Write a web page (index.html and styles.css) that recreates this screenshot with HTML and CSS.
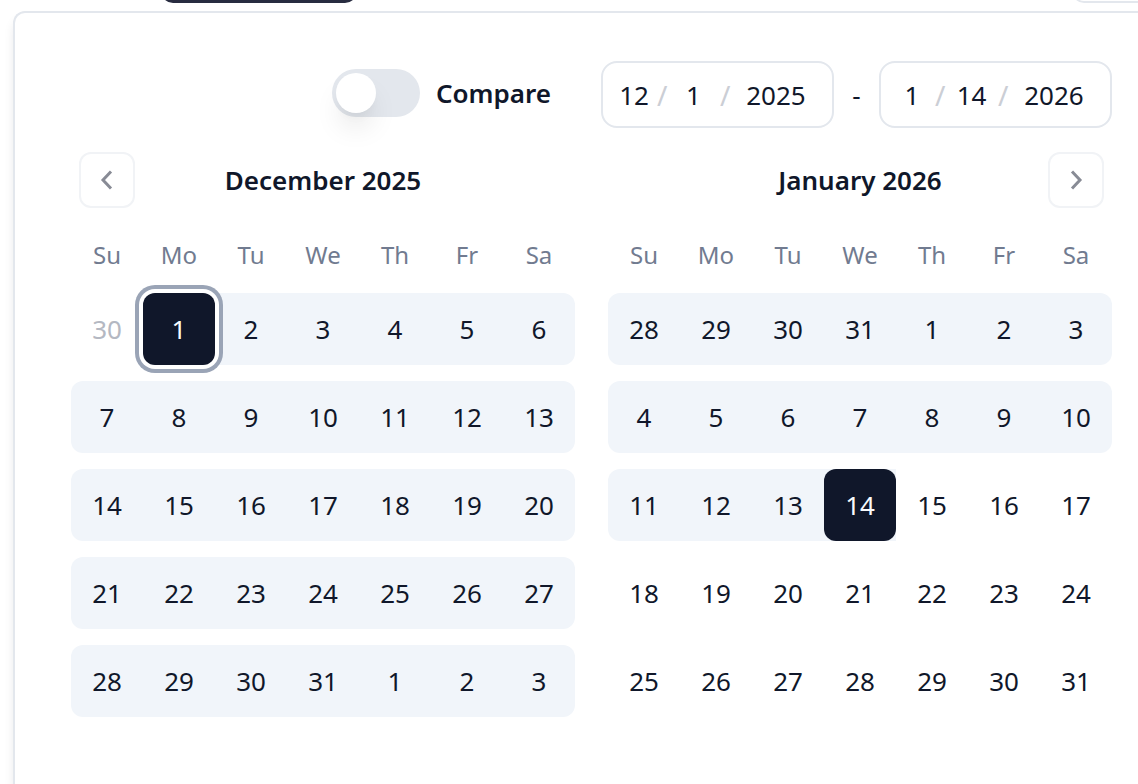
FILE: index.html
```html
<!DOCTYPE html>
<html lang="en">
<head>
    <meta charset="UTF-8">
    <meta name="viewport" content="width=device-width, initial-scale=1.0">
    <title>Date range</title>
    <link rel="stylesheet" href="styles.css">
</head>
<body>
    <div class="toolbar">
        <div class="toolbar-button"></div>
        <div class="toolbar-field"></div>
    </div>
    <main class="popover">
        <div class="controls">
            <div class="compare">
                <input type="checkbox" role="switch" id="compare" class="switch">
                <label for="compare">Compare</label>
            </div>
            <div class="range">
                <div class="date-input">
                    <input class="part-month" type="text" value="12" aria-label="Start month">
                    <span>/</span>
                    <input class="part-day" type="text" value="1" aria-label="Start day">
                    <span>/</span>
                    <input class="part-year" type="text" value="2025" aria-label="Start year">
                </div>
                <div class="dash">-</div>
                <div class="date-input">
                    <input class="part-month" type="text" value="1" aria-label="End month">
                    <span>/</span>
                    <input class="part-day" type="text" value="14" aria-label="End day">
                    <span>/</span>
                    <input class="part-year" type="text" value="2026" aria-label="End year">
                </div>
            </div>
        </div>

        <div class="months">
            <section class="month">
                <div class="month-header">
                    <button class="nav" aria-label="Previous month">
                        <svg viewBox="0 0 28 28" width="28" height="28"><path d="M18 5.5 L10 14 L18 22.5"/></svg>
                    </button>
                    <h2>December 2025</h2>
                </div>
                <table>
                    <thead>
                        <tr><th>Su</th><th>Mo</th><th>Tu</th><th>We</th><th>Th</th><th>Fr</th><th>Sa</th></tr>
                    </thead>
                    <tbody>
                        <tr>
                            <td><button class="outside">30</button></td>
                            <td class="in-range start"><button class="selected focused">1</button></td>
                            <td class="in-range"><button>2</button></td>
                            <td class="in-range"><button>3</button></td>
                            <td class="in-range"><button>4</button></td>
                            <td class="in-range"><button>5</button></td>
                            <td class="in-range"><button>6</button></td>
                        </tr>
                        <tr>
                            <td class="in-range"><button>7</button></td>
                            <td class="in-range"><button>8</button></td>
                            <td class="in-range"><button>9</button></td>
                            <td class="in-range"><button>10</button></td>
                            <td class="in-range"><button>11</button></td>
                            <td class="in-range"><button>12</button></td>
                            <td class="in-range"><button>13</button></td>
                        </tr>
                        <tr>
                            <td class="in-range"><button>14</button></td>
                            <td class="in-range"><button>15</button></td>
                            <td class="in-range"><button>16</button></td>
                            <td class="in-range"><button>17</button></td>
                            <td class="in-range"><button>18</button></td>
                            <td class="in-range"><button>19</button></td>
                            <td class="in-range"><button>20</button></td>
                        </tr>
                        <tr>
                            <td class="in-range"><button>21</button></td>
                            <td class="in-range"><button>22</button></td>
                            <td class="in-range"><button>23</button></td>
                            <td class="in-range"><button>24</button></td>
                            <td class="in-range"><button>25</button></td>
                            <td class="in-range"><button>26</button></td>
                            <td class="in-range"><button>27</button></td>
                        </tr>
                        <tr>
                            <td class="in-range"><button>28</button></td>
                            <td class="in-range"><button>29</button></td>
                            <td class="in-range"><button>30</button></td>
                            <td class="in-range"><button>31</button></td>
                            <td class="in-range"><button>1</button></td>
                            <td class="in-range"><button>2</button></td>
                            <td class="in-range"><button>3</button></td>
                        </tr>
                    </tbody>
                </table>
            </section>

            <section class="month">
                <div class="month-header">
                    <h2>January 2026</h2>
                    <button class="nav" aria-label="Next month">
                        <svg viewBox="0 0 28 28" width="28" height="28"><path d="M10 5.5 L18 14 L10 22.5"/></svg>
                    </button>
                </div>
                <table>
                    <thead>
                        <tr><th>Su</th><th>Mo</th><th>Tu</th><th>We</th><th>Th</th><th>Fr</th><th>Sa</th></tr>
                    </thead>
                    <tbody>
                        <tr>
                            <td class="in-range"><button>28</button></td>
                            <td class="in-range"><button>29</button></td>
                            <td class="in-range"><button>30</button></td>
                            <td class="in-range"><button>31</button></td>
                            <td class="in-range"><button>1</button></td>
                            <td class="in-range"><button>2</button></td>
                            <td class="in-range"><button>3</button></td>
                        </tr>
                        <tr>
                            <td class="in-range"><button>4</button></td>
                            <td class="in-range"><button>5</button></td>
                            <td class="in-range"><button>6</button></td>
                            <td class="in-range"><button>7</button></td>
                            <td class="in-range"><button>8</button></td>
                            <td class="in-range"><button>9</button></td>
                            <td class="in-range"><button>10</button></td>
                        </tr>
                        <tr>
                            <td class="in-range"><button>11</button></td>
                            <td class="in-range"><button>12</button></td>
                            <td class="in-range"><button>13</button></td>
                            <td class="in-range"><button class="selected">14</button></td>
                            <td><button>15</button></td>
                            <td><button>16</button></td>
                            <td><button>17</button></td>
                        </tr>
                        <tr>
                            <td><button>18</button></td>
                            <td><button>19</button></td>
                            <td><button>20</button></td>
                            <td><button>21</button></td>
                            <td><button>22</button></td>
                            <td><button>23</button></td>
                            <td><button>24</button></td>
                        </tr>
                        <tr>
                            <td><button>25</button></td>
                            <td><button>26</button></td>
                            <td><button>27</button></td>
                            <td><button>28</button></td>
                            <td><button>29</button></td>
                            <td><button>30</button></td>
                            <td><button>31</button></td>
                        </tr>
                    </tbody>
                </table>
            </section>
        </div>
    </main>
</body>
</html>
```
FILE: styles.css
```css
* {
    box-sizing: border-box;
}
body {
    margin: 0;
    min-height: 100vh;
    display: flex;
    flex-direction: column;
    overflow: hidden;
    background-color: #fff;
    color: #10172a;
    font-family: "Noto Sans", "Open Sans", sans-serif;
    font-size: 26px;
}
button, input {
    font: inherit;
    color: inherit;
}
button {
    cursor: pointer;
}

/* controls behind the popover, only their lower edge shows */
.toolbar {
    display: flex;
    justify-content: space-between;
    align-items: flex-end;
    height: 11px;
    padding: 0 0 8px 161px;
    overflow: hidden;
}
.toolbar-button {
    width: 196px;
    height: 40px;
    border-radius: 12px;
    background-color: #282c40;
}
.toolbar-field {
    width: 66px;
    height: 40px;
    border: 2px solid #e3e7ed;
    border-right: none;
    border-radius: 12px 0 0 12px;
}

.popover {
    flex: 1;
    margin-left: 13px;
    padding: 48px 26px 48px 56px;
    border: 2px solid #e3e7ed;
    border-right: none;
    border-bottom: none;
    border-radius: 12px 0 0 0;
    background-color: #fff;
    box-shadow: 0 8px 12px -2px rgba(16, 23, 42, 0.12);
}
.controls {
    display: flex;
    justify-content: flex-end;
    align-items: center;
    gap: 50px;
    margin-bottom: 24px;
}
.compare {
    display: flex;
    align-items: center;
    gap: 16px;
    padding-bottom: 4px;
    font-weight: 600;
}
.switch {
    appearance: none;
    width: 88px;
    height: 48px;
    margin: 0;
    padding: 4px;
    border-radius: 24px;
    background-color: #e3e7ed;
    cursor: pointer;
}
.switch::before {
    content: "";
    display: block;
    width: 40px;
    height: 40px;
    border-radius: 50%;
    background-color: #fff;
    box-shadow: 0 18px 28px -4px rgba(0, 0, 0, 0.1), 0 8px 12px -6px rgba(0, 0, 0, 0.06);
}
.switch:checked::before {
    margin-left: 40px;
}

.range {
    display: flex;
    align-items: center;
}
.date-input {
    display: flex;
    align-items: center;
    width: 233px;
    height: 67px;
    padding: 0 8px;
    border: 2px solid #e3e7ed;
    border-radius: 16px;
}
.date-input input {
    padding: 0;
    border: none;
    outline: none;
    background: none;
    text-align: center;
}
.date-input span {
    width: 10px;
    text-align: center;
    font-size: 28px;
    color: #cbced5;
}
.part-month {
    width: 46px;
}
.part-day {
    width: 53px;
}
.part-year {
    width: 92px;
}
.dash {
    width: 45px;
    text-align: center;
}

.months {
    display: grid;
    grid-template-columns: 1fr 1fr;
    gap: 33px;
}
.month-header {
    display: grid;
    grid-template-columns: 56px 1fr 56px;
    align-items: center;
    height: 56px;
    margin-bottom: 12px;
    padding: 0 8px;
}
.month-header h2 {
    grid-column: 2;
    margin: 0;
    text-align: center;
    font-size: 26px;
    font-weight: 600;
}
.nav {
    display: flex;
    align-items: center;
    justify-content: center;
    height: 56px;
    padding: 0;
    border: 2px solid #f1f3f6;
    border-radius: 12px;
    background: none;
}
.nav svg {
    fill: none;
    stroke: #888b95;
    stroke-width: 3;
}

table {
    width: 100%;
    table-layout: fixed;
    border-spacing: 0 16px;
}
th {
    height: 41px;
    padding: 0 0 3px;
    font-size: 24px;
    font-weight: 400;
    line-height: 38px;
    color: #717b90;
}
td {
    height: 72px;
    padding: 0;
}
td button {
    display: block;
    width: 100%;
    height: 72px;
    padding: 0;
    border: none;
    border-radius: 12px;
    background: none;
}
.in-range {
    background-color: #f1f5fa;
}
.in-range:first-child, .start {
    border-radius: 12px 0 0 12px;
}
.in-range:last-child {
    border-radius: 0 12px 12px 0;
}
.outside {
    color: #b4b8c2;
}
td .selected {
    background-color: #10172a;
    color: #f8fafc;
}
td .focused {
    position: relative;
    z-index: 1;
    box-shadow: 0 0 0 4px #fff, 0 0 0 8px #9aa4b6;
}
```
